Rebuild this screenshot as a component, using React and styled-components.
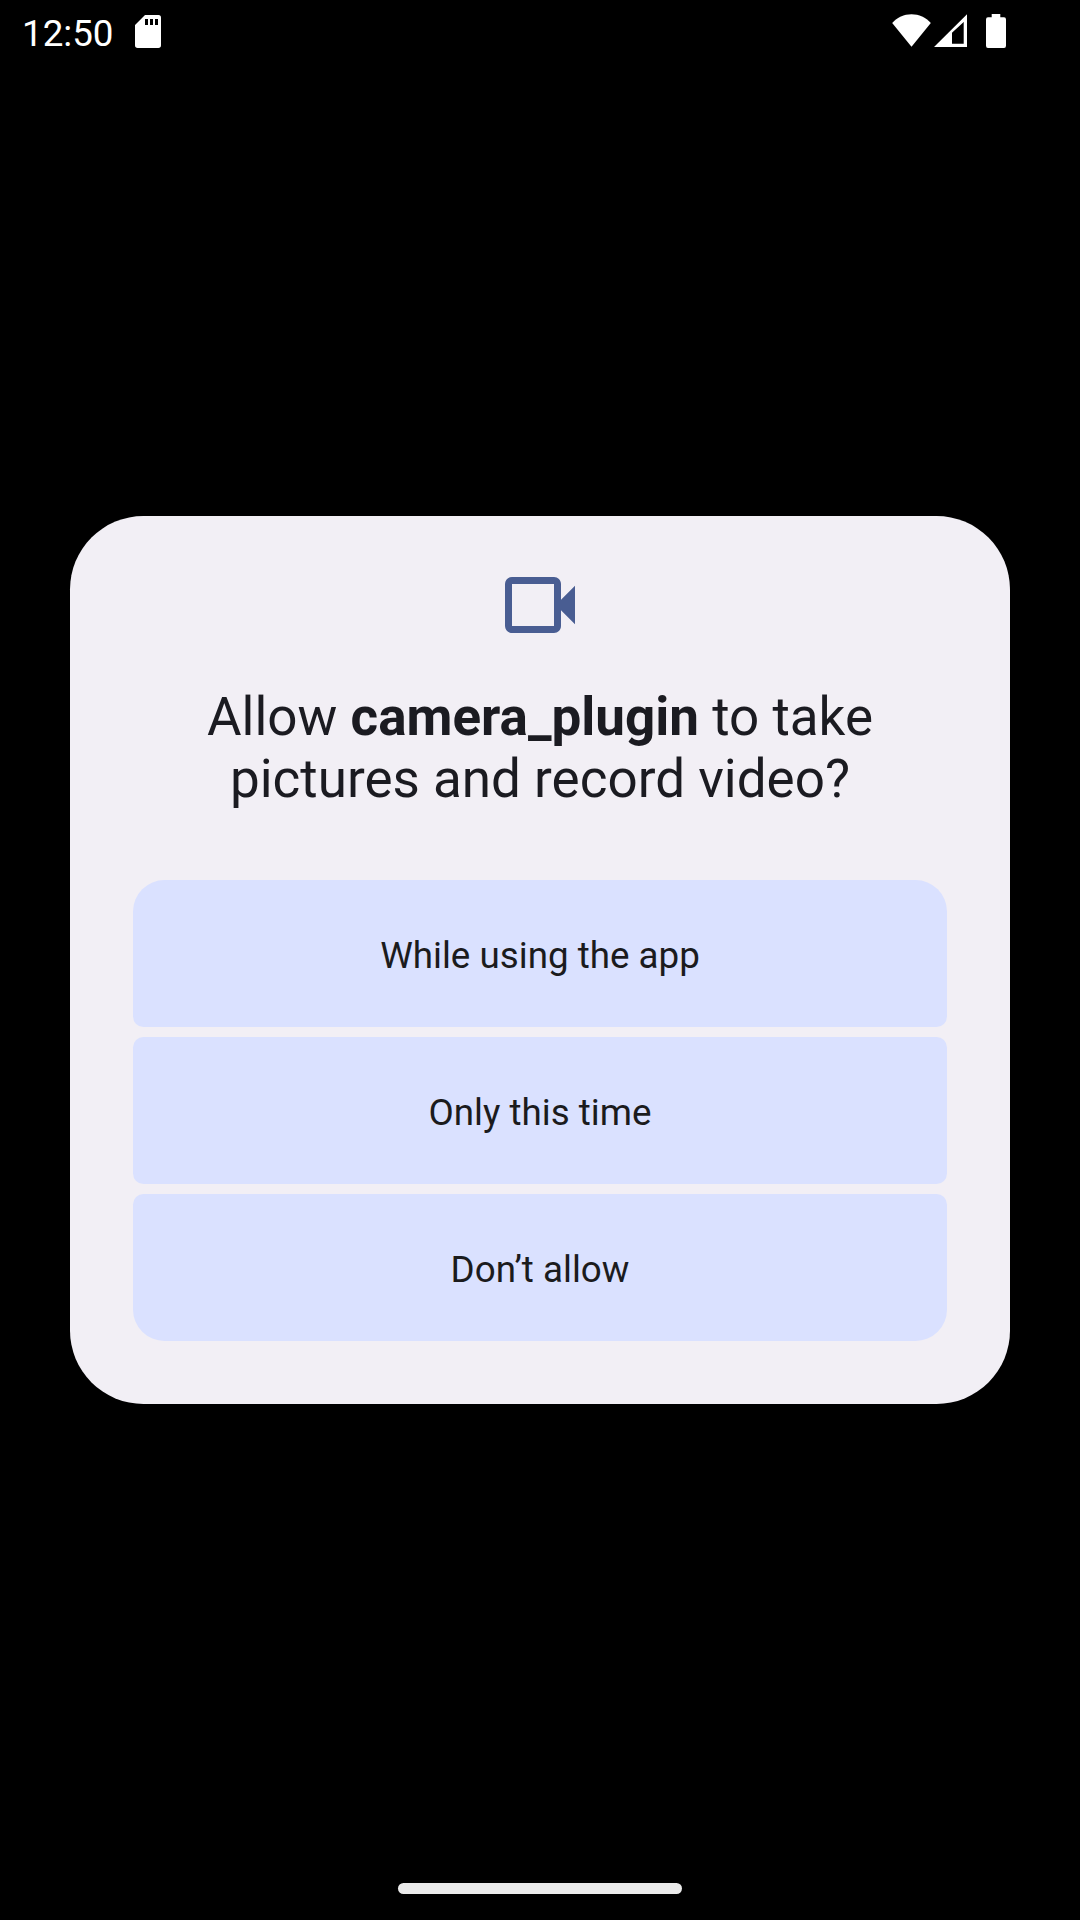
import React from "react";
import styled, { createGlobalStyle } from "styled-components";

const GlobalStyle = createGlobalStyle`
  *, *::before, *::after { box-sizing: border-box; }
  body { margin: 0; background: #000; }
`;

const Screen = styled.div`
  display: flex;
  flex-direction: column;
  width: 1080px;
  height: 1920px;
  overflow: hidden;
  background: #000;
  font-family: Roboto, "Liberation Sans", sans-serif;
`;

const StatusBar = styled.header`
  display: flex;
  justify-content: space-between;
  height: 66px;
  padding: 0 74px 0 22px;
  color: #fff;
`;

const StatusGroup = styled.div`
  display: flex;
  align-items: flex-start;
`;

const Clock = styled.time`
  width: 113px;
  padding-top: 12px;
  font-size: 36.75px;
  line-height: 43px;
`;

const StatusIcon = styled.svg`
  display: block;
  flex: none;
  margin-top: 14px;
  margin-left: ${(p) => p.$gap || 0}px;
  fill: currentColor;
`;

const Main = styled.main`
  flex: 1;
  display: flex;
  flex-direction: column;
  align-items: center;
  padding-top: 450px;
`;

const Dialog = styled.section`
  display: flex;
  flex-direction: column;
  align-items: center;
  width: 940px;
  height: 888px;
  padding: 47px 63px 63px;
  border-radius: 73.5px;
  background: #f2eff5;
`;

const CameraIcon = styled.svg`
  display: block;
  flex: none;
  color: #495d92;
`;

const Title = styled.h1`
  margin: 39px 0 0;
  font-size: 53px;
  font-weight: 400;
  line-height: 62px;
  text-align: center;
  white-space: nowrap;
  color: #1b1b21;
`;

const AppName = styled.b`
  font-weight: 700;
`;

const Actions = styled.div`
  display: flex;
  flex-direction: column;
  gap: 10px;
  width: 100%;
  margin-top: auto;
`;

const ActionButton = styled.button`
  display: flex;
  align-items: center;
  justify-content: center;
  height: 147px;
  padding: 4px 0 0;
  border: 0;
  border-radius: 10.5px;
  background: #dae1ff;
  color: #1b1b1d;
  font-family: inherit;
  font-size: 36.75px;
  line-height: 43px;

  &:first-child {
    border-top-left-radius: 31.5px;
    border-top-right-radius: 31.5px;
  }
  &:last-child {
    border-bottom-left-radius: 31.5px;
    border-bottom-right-radius: 31.5px;
  }
`;

const NavigationBar = styled.footer`
  display: flex;
  justify-content: center;
  height: 37px;
`;

const HomeHandle = styled.div`
  width: 284px;
  height: 11px;
  border-radius: 5.5px;
  background: #ebebeb;
`;

const choices = ["While using the app", "Only this time", "Don’t allow"];

export default function App() {
  return (
    <Screen>
      <GlobalStyle />
      <StatusBar>
        <StatusGroup>
          <Clock>12:50</Clock>
          <StatusIcon width="26" height="34" viewBox="0 0 26 34">
            <path
              fillRule="evenodd"
              d="M10 1H23.5Q26 1 26 3.7V31.3Q26 34 23.3 34H2.7Q0 34 0 31.3V11ZM10 5V11H13V5ZM15 5V11H18V5ZM20 5V11H23V5Z"
            />
          </StatusIcon>
        </StatusGroup>
        <StatusGroup>
          <StatusIcon width="39" height="33" viewBox="0 0 39 33">
            <path d="M19.5 32.7L0.2 9C5.2 3.6 12 0.3 19.5 0.3S33.8 3.6 38.8 9Z" />
          </StatusIcon>
          <StatusIcon $gap={3} width="33" height="33" viewBox="0 0 33 33">
            <path fillRule="evenodd" d="M0 33L33 0.3V33ZM18 18.7V29.7H29.7V8Z" />
          </StatusIcon>
          <StatusIcon $gap={19} width="20" height="34" viewBox="0 0 20 34">
            <path d="M5.7 0H14.3V3.3H18Q20 3.3 20 5.5V31.8Q20 34 18 34H2Q0 34 0 31.8V5.5Q0 3.3 2 3.3H5.7Z" />
          </StatusIcon>
        </StatusGroup>
      </StatusBar>
      <Main>
        <Dialog role="dialog" aria-labelledby="permission-title">
          <CameraIcon width="84" height="84" viewBox="0 0 24 24" fill="currentColor">
            <path
              fillRule="evenodd"
              d="M4 4H16C17.1 4 18 4.9 18 6V10.5L22 6.5V17.5L18 13.5V18C18 19.1 17.1 20 16 20H4C2.9 20 2 19.1 2 18V6C2 4.9 2.9 4 4 4ZM4 6V18H16V6Z"
            />
          </CameraIcon>
          <Title id="permission-title">
            Allow <AppName>camera_plugin</AppName> to take
            <br />
            pictures and record video?
          </Title>
          <Actions>
            {choices.map((label) => (
              <ActionButton key={label} type="button">
                {label}
              </ActionButton>
            ))}
          </Actions>
        </Dialog>
      </Main>
      <NavigationBar>
        <HomeHandle />
      </NavigationBar>
    </Screen>
  );
}
